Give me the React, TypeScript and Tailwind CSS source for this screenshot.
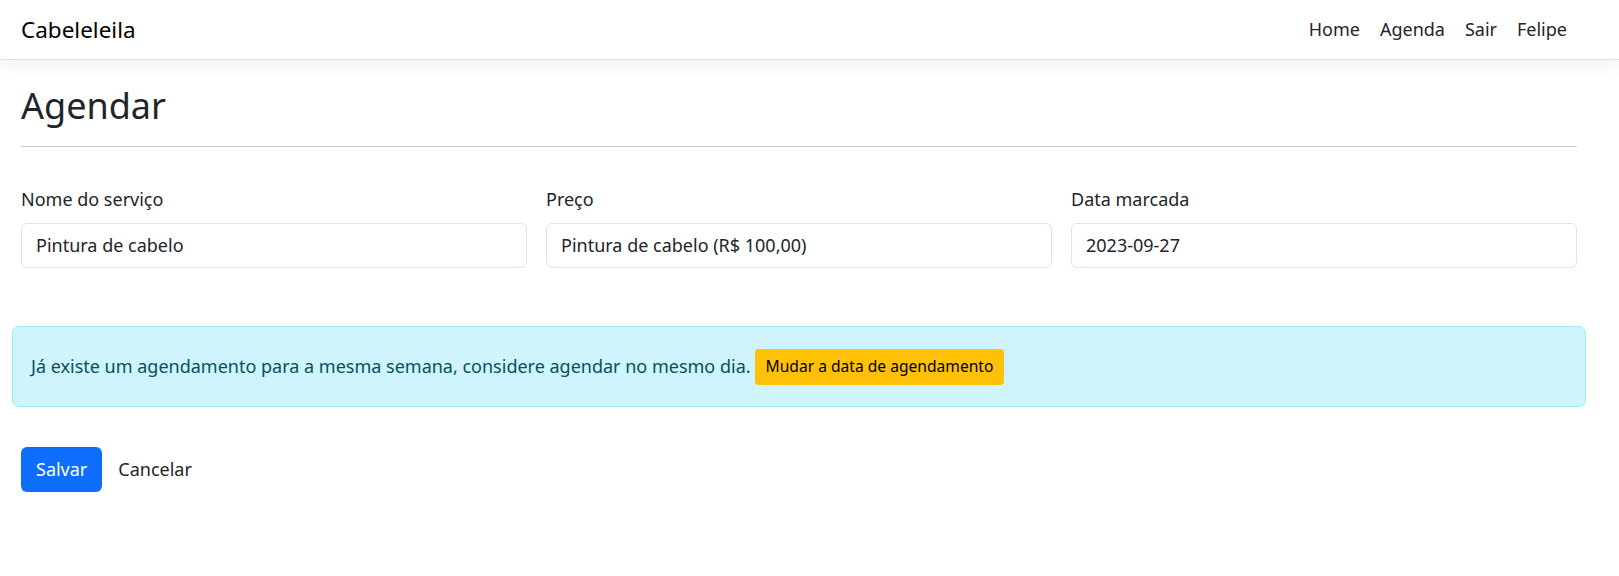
import React from 'react';

const navLinks = ["Home", "Agenda", "Sair", "Felipe"];

const fields = [
  { label: "Nome do serviço", value: "Pintura de cabelo" },
  { label: "Preço", value: "Pintura de cabelo (R$ 100,00)" },
  { label: "Data marcada", value: "2023-09-27" },
];

export default function App() {
  return (
    <div className="min-h-[576px] bg-white text-[#212529] font-['Noto_Sans',sans-serif]">
      {/* top navbar */}
      <nav className="h-[60px] bg-white border-b border-[#dfe1e4] shadow-[0_8px_16px_rgba(0,0,0,0.05)]">
        <div className="h-full flex items-center justify-between pl-[21px] pr-[42px]">
          <span className="text-[22.5px] text-black">Cabeleleila</span>
          <ul className="flex items-center">
            {navLinks.map((l) => (
              <li key={l} className="px-[10px] text-[18px] text-[#212529]">
                {l}
              </li>
            ))}
          </ul>
        </div>
      </nav>

      <main className="pl-[21px] pr-[42px]">
        <h1 className="mt-[24px] text-[36px] leading-[44px] text-[#212529]">Agendar</h1>
        <hr className="mt-[18px] border-0 border-t border-[#c9cacb]" />

        <div className="mt-[40px] grid grid-cols-3 gap-[19px]">
          {fields.map((f) => (
            <div key={f.label} className="flex flex-col">
              <label className="text-[18px] leading-[25px] mb-[11px]">{f.label}</label>
              <div className="h-[45px] flex items-center pl-[14px] border border-[#dee2e6] rounded-[6px] text-[18px]">
                {f.value}
              </div>
            </div>
          ))}
        </div>

        <div className="-mx-[9px] mt-[58px] h-[81px] flex items-center px-[18px] bg-[#cff4fc] border border-[#9eeaf9] rounded-[7px] text-[#055160] text-[18px]">
          <span>Já existe um agendamento para a mesma semana, considere agendar no mesmo dia.</span>
          <span className="ml-[4px] h-[36px] flex items-center px-[11px] bg-[#ffc107] rounded-[4px] text-black text-[15.6px]">
            Mudar a data de agendamento
          </span>
        </div>

        <div className="mt-[40px] flex items-center">
          <button className="h-[45px] px-[15px] bg-[#0d6efd] text-white rounded-[6px] text-[18px]">Salvar</button>
          <span className="ml-[16px] text-[18px]">Cancelar</span>
        </div>
      </main>
    </div>
  );
}
